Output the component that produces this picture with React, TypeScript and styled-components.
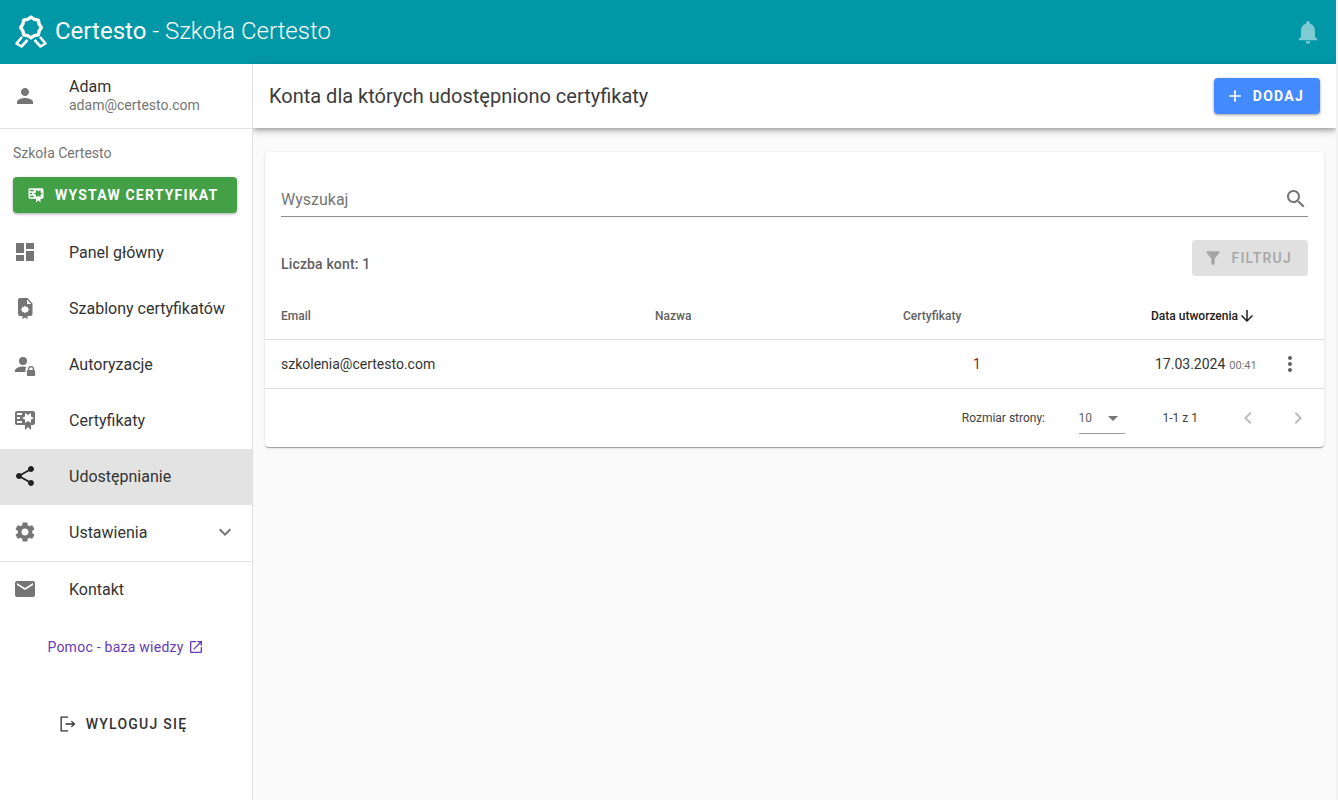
import styled, { createGlobalStyle } from 'styled-components';

const GlobalStyle = createGlobalStyle`
  html, body {
    margin: 0;
    padding: 0;
    background: #fafafa;
    font-family: 'Roboto', 'Liberation Sans', sans-serif;
    overflow: hidden;
  }
  * { box-sizing: border-box; }
`;

const Page = styled.div`
  display: flex;
  flex-direction: column;
  width: 1338px;
  height: 800px;
  overflow: hidden;
  border-right: 2px solid #f1f1f1;
`;

const TopBar = styled.header`
  display: flex;
  align-items: center;
  justify-content: space-between;
  flex: 0 0 64px;
  padding: 0 14px;
  background: #0097a7;
  color: #fff;
`;

const Brand = styled.div`
  display: flex;
  align-items: center;
  gap: 7px;
  font-size: 24px;
  font-weight: 300;
  line-height: 32px;
`;

const BrandText = styled.span`
  padding-bottom: 3px;
`;

const BrandName = styled.b`
  font-weight: 400;
`;

const Body = styled.div`
  display: flex;
  flex: 1;
  min-height: 0;
`;

const Sidebar = styled.aside`
  position: relative;
  z-index: 1;
  display: flex;
  flex-direction: column;
  flex: 0 0 253px;
  background: #fff;
  border-right: 1px solid #e0e0e0;
`;

const UserBox = styled.div`
  display: flex;
  align-items: center;
  height: 65px;
  padding: 0 0 1px 13px;
  border-bottom: 1px solid #e0e0e0;
`;

const IconSlot = styled.span`
  display: flex;
  flex: 0 0 24px;
  margin-right: 32px;
  color: #757575;
`;

const UserName = styled.div`
  font-size: 16px;
  line-height: 20px;
  color: #333;
`;

const UserMail = styled.div`
  font-size: 14px;
  line-height: 17px;
  color: #757575;
`;

const SchoolLabel = styled.div`
  padding: 16px 13px 0;
  font-size: 14px;
  line-height: 17px;
  color: #757575;
`;

const IssueButton = styled.button`
  display: flex;
  align-items: center;
  gap: 10px;
  height: 36px;
  margin: 15px 15px 12px 13px;
  padding: 0 0 0 14px;
  border: none;
  border-radius: 4px;
  background: #43a047;
  color: #fff;
  font-family: inherit;
  font-size: 14px;
  font-weight: 700;
  letter-spacing: 1.19px;
  box-shadow: 0 1px 3px rgba(0, 0, 0, 0.35);
`;

const NavList = styled.nav`
  display: flex;
  flex-direction: column;
`;

const NavItem = styled.div<{ $active?: boolean; $divided?: boolean }>`
  display: flex;
  align-items: center;
  height: ${({ $divided }) => ($divided ? '57px' : '56px')};
  padding: 0 15px 2px 13px;
  background: ${({ $active }) => ($active ? '#e3e3e3' : 'transparent')};
  border-bottom: ${({ $divided }) => ($divided ? '1px solid #e0e0e0' : 'none')};
  font-size: 16px;
  color: #333;

  ${IconSlot} {
    color: ${({ $active }) => ($active ? '#212121' : '#757575')};
  }
`;

const NavLabel = styled.span`
  flex: 1;
`;

const HelpLink = styled.a`
  display: flex;
  align-items: center;
  justify-content: center;
  gap: 4px;
  margin-top: 20px;
  padding-right: 1px;
  font-size: 14px;
  letter-spacing: 0.25px;
  line-height: 18px;
  color: #673ab7;
`;

const LogoutButton = styled.div`
  display: flex;
  align-items: center;
  justify-content: center;
  gap: 8px;
  margin-top: 58px;
  padding-right: 7px;
  font-size: 14px;
  font-weight: 500;
  letter-spacing: 1.25px;
  line-height: 18px;
  color: #333;
`;

const Main = styled.main`
  display: flex;
  flex-direction: column;
  flex: 1;
  min-width: 0;
`;

const TitleBar = styled.div`
  display: flex;
  align-items: center;
  justify-content: space-between;
  flex: 0 0 64px;
  padding: 0 16px;
  background: #fff;
  box-shadow: 0 2px 4px -1px rgba(0, 0, 0, 0.2), 0 4px 5px 0 rgba(0, 0, 0, 0.14), 0 1px 10px 0 rgba(0, 0, 0, 0.12);
`;

const PageTitle = styled.h1`
  margin: 0;
  font-size: 20px;
  font-weight: 400;
  line-height: 28px;
  color: #3c3c3c;
`;

const AddButton = styled.button`
  display: flex;
  align-items: center;
  gap: 8px;
  height: 36px;
  padding: 0 16px 0 11px;
  border: none;
  border-radius: 4px;
  background: #448aff;
  color: #fff;
  font-family: inherit;
  font-size: 14px;
  font-weight: 700;
  letter-spacing: 1.25px;
  box-shadow: 0 1px 3px rgba(0, 0, 0, 0.4);
`;

const Card = styled.section`
  margin: 24px 12px 0;
  padding-top: 24px;
  background: #fff;
  border-radius: 4px;
  box-shadow: 0 2px 1px -1px rgba(0, 0, 0, 0.2), 0 1px 1px 0 rgba(0, 0, 0, 0.14), 0 1px 3px 0 rgba(0, 0, 0, 0.12);
`;

const SearchRow = styled.div`
  display: flex;
  align-items: center;
  justify-content: space-between;
  height: 41px;
  margin: 0 16px;
  padding-top: 6px;
  border-bottom: 1px solid #8c8c8c;
  font-size: 16px;
  color: #757575;
`;

const FilterRow = styled.div`
  display: flex;
  align-items: center;
  justify-content: space-between;
  margin: 23px 16px 0;
`;

const CountLabel = styled.div`
  padding-top: 12px;
  font-size: 14px;
  font-weight: 500;
  letter-spacing: 0.15px;
  color: #616161;
`;

const FilterButton = styled.button`
  display: flex;
  align-items: center;
  gap: 8px;
  height: 36px;
  padding: 0 16px 0 11px;
  border: none;
  border-radius: 4px;
  background: #e0e0e0;
  color: #a6a6a6;
  font-family: inherit;
  font-size: 14px;
  font-weight: 500;
  letter-spacing: 1.25px;
`;

const Row = styled.div<{ $height: number; $noBorder?: boolean }>`
  display: grid;
  grid-template-columns: 374px 248px 196px 1fr 54px;
  align-items: center;
  height: ${({ $height }) => $height}px;
  padding-left: 16px;
  border-bottom: ${({ $noBorder }) => ($noBorder ? 'none' : '1px solid #e0e0e0')};
`;

const HeadRow = styled(Row)`
  padding-top: 16px;
`;

const HeadCell = styled.div<{ $sorted?: boolean; $indent?: number }>`
  display: flex;
  align-items: center;
  padding-left: ${({ $indent }) => $indent || 0}px;
  font-size: 12px;
  font-weight: 500;
  white-space: nowrap;
  color: ${({ $sorted }) => ($sorted ? '#212121' : '#616161')};
`;

const Cell = styled.div<{ $indent?: number }>`
  padding-left: ${({ $indent }) => $indent || 0}px;
  font-size: 14px;
  white-space: nowrap;
  color: #333;
`;

const Count = styled(Cell)`
  color: #8a1f1f;
`;

const Time = styled.span`
  margin-left: 4px;
  font-size: 11px;
  color: #757575;
`;

const RowAction = styled.span`
  display: flex;
  padding-left: 8px;
  color: #616161;
`;

const Pagination = styled.div`
  display: flex;
  align-items: center;
  justify-content: flex-end;
  height: 58px;
  padding-right: 14px;
  font-size: 12px;
  color: #424242;
`;

const PageSize = styled.div`
  display: flex;
  align-items: center;
  justify-content: space-between;
  width: 46px;
  height: 32px;
  margin: 0 38px 0 33.5px;
  border-bottom: 1px solid #9e9e9e;
  color: #616161;
`;

const PageRange = styled.span`
  margin-right: 12px;
`;

const PagerIcon = styled.span`
  display: flex;
  margin-left: 26px;
  color: #bdbdbd;
`;

type IconProps = {
  d: string;
  size?: number;
  color?: string;
};

function Icon({ d, size = 24, color = 'currentColor' }: IconProps): JSX.Element {
  return (
    <svg width={size} height={size} viewBox="0 0 24 24" fill={color}>
      <path d={d} />
    </svg>
  );
}

const paths = {
  person: 'M12 12c2.21 0 4-1.79 4-4s-1.79-4-4-4-4 1.79-4 4 1.79 4 4 4zm0 2c-2.67 0-8 1.34-8 4v2h16v-2c0-2.66-5.33-4-8-4z',
  dashboard: 'M3 13h8V3H3v10zm0 8h8v-6H3v6zm10 0h8V11h-8v10zm0-18v6h8V3h-8z',
  share: 'M18 16.08c-.76 0-1.44.3-1.96.77L8.91 12.7c.05-.23.09-.46.09-.7s-.04-.47-.09-.7l7.05-4.11c.54.5 1.25.81 2.04.81 1.66 0 3-1.34 3-3s-1.34-3-3-3-3 1.34-3 3c0 .24.04.47.09.7L8.04 9.81C7.5 9.31 6.79 9 6 9c-1.66 0-3 1.34-3 3s1.34 3 3 3c.79 0 1.5-.31 2.04-.81l7.12 4.16c-.05.21-.08.43-.08.65 0 1.61 1.31 2.92 2.92 2.92 1.61 0 2.92-1.31 2.92-2.92s-1.31-2.92-2.92-2.92z',
  settings: 'M19.14 12.94c.04-.3.06-.61.06-.94 0-.32-.02-.64-.07-.94l2.03-1.58c.18-.14.23-.41.12-.61l-1.92-3.32c-.12-.22-.37-.29-.59-.22l-2.39.96c-.5-.38-1.03-.7-1.62-.94l-.36-2.54c-.04-.24-.24-.41-.48-.41h-3.84c-.24 0-.43.17-.47.41l-.36 2.54c-.59.24-1.13.57-1.62.94l-2.39-.96c-.22-.08-.47 0-.59.22L2.74 8.87c-.12.21-.08.47.12.61l2.03 1.58c-.05.3-.09.63-.09.94s.02.64.07.94l-2.03 1.58c-.18.14-.23.41-.12.61l1.92 3.32c.12.22.37.29.59.22l2.39-.96c.5.38 1.03.7 1.62.94l.36 2.54c.05.24.24.41.48.41h3.84c.24 0 .44-.17.47-.41l.36-2.54c.59-.24 1.13-.56 1.62-.94l2.39.96c.22.08.47 0 .59-.22l1.92-3.32c.12-.22.07-.47-.12-.61l-2.01-1.58zM12 15.6c-1.98 0-3.6-1.62-3.6-3.6s1.62-3.6 3.6-3.6 3.6 1.62 3.6 3.6-1.62 3.6-3.6 3.6z',
  email: 'M20 4H4c-1.1 0-1.99.9-1.99 2L2 18c0 1.1.9 2 2 2h16c1.1 0 2-.9 2-2V6c0-1.1-.9-2-2-2zm0 4l-8 5-8-5V6l8 5 8-5v2z',
  bell: 'M12 22c1.1 0 2-.9 2-2h-4c0 1.1.89 2 2 2zm6-6v-5c0-3.07-1.64-5.64-4.5-6.32V4c0-.83-.67-1.5-1.5-1.5s-1.5.67-1.5 1.5v.68C7.63 5.36 6 7.92 6 11v5l-2 2v1h16v-1l-2-2z',
  search: 'M15.5 14h-.79l-.28-.27C15.41 12.59 16 11.11 16 9.5 16 5.91 13.09 3 9.5 3S3 5.91 3 9.5 5.91 16 9.5 16c1.61 0 3.09-.59 4.23-1.57l.27.28v.79l5 4.99L20.49 19l-4.99-5zm-6 0C7.01 14 5 11.99 5 9.5S7.01 5 9.5 5 14 7.01 14 9.5 11.99 14 9.5 14z',
  filter: 'M4.25 5.61C6.27 8.2 10 13 10 13v6c0 .55.45 1 1 1h2c.55 0 1-.45 1-1v-6s3.72-4.8 5.74-7.39c.51-.66.04-1.61-.79-1.61H5.04c-.83 0-1.3.95-.79 1.61z',
  more: 'M12 8c1.1 0 2-.9 2-2s-.9-2-2-2-2 .9-2 2 .9 2 2 2zm0 2c-1.1 0-2 .9-2 2s.9 2 2 2 2-.9 2-2-.9-2-2-2zm0 6c-1.1 0-2 .9-2 2s.9 2 2 2 2-.9 2-2-.9-2-2-2z',
  arrowDown: 'M20 12l-1.41-1.41L13 16.17V4h-2v12.17l-5.58-5.59L4 12l8 8 8-8z',
  add: 'M19 13h-6v6h-2v-6H5v-2h6V5h2v6h6v2z',
  chevronLeft: 'M15.41 7.41L14 6l-6 6 6 6 1.41-1.41L10.83 12z',
  chevronRight: 'M10 6L8.59 7.41 13.17 12l-4.58 4.59L10 18l6-6z',
  expand: 'M16.59 8.59L12 13.17 7.41 8.59 6 10l6 6 6-6z',
  dropDown: 'M7 10l5 5 5-5z',
  openNew: 'M19 19H5V5h7V3H5c-1.11 0-2 .9-2 2v14c0 1.1.89 2 2 2h14c1.1 0 2-.9 2-2v-7h-2v7zM14 3v2h3.59l-9.83 9.83 1.41 1.41L19 6.41V10h2V3h-7z',
  certificate: 'M4 3C2.89 3 2 3.89 2 5v10a2 2 0 0 0 2 2h8v5l3-3 3 3v-5h2a2 2 0 0 0 2-2V5a2 2 0 0 0-2-2H4zm8 2l3 2 3-2v3.5l3 1.5-3 1.5V15l-3-2-3 2v-3.5L9 10l3-1.5V5zM4 5h5v2H4V5zm0 4h3v2H4V9zm0 4h5v2H4v-2z',
  logout: 'M3 3h9v1.6H4.6v14.8H12V21H3zM16.6 8l4.4 4-4.4 4-1.1-1.1 2.3-2.1H9v-1.6h8.8l-2.3-2.1z',
};

// scalloped ring of the rosette, 8 bumps around the centre of the logo
const rosette = Array.from({ length: 16 }, (_, i) => {
  const angle = (i * Math.PI) / 8;
  const radius = i % 2 === 0 ? 10.4 : 8.8;
  const x = 17 + radius * Math.sin(angle);
  const y = 12.5 - radius * Math.cos(angle);
  return `${i === 0 ? 'M' : 'L'}${x.toFixed(2)} ${y.toFixed(2)}`;
}).join(' ');

function Logo(): JSX.Element {
  return (
    <svg width="34" height="34" viewBox="0 0 34 34" fill="none" stroke="#fff">
      <path strokeWidth="3.4" strokeLinejoin="round" d={`${rosette} Z`} />
      <path strokeWidth="2.6" strokeLinejoin="round" d="M8 22l-5.500 6.500 5 3L13.500 25M26 22l5.500 6.500-5 3L20.500 25" />
    </svg>
  );
}

function TemplateIcon(): JSX.Element {
  return (
    <svg width="24" height="24" viewBox="0 0 24 24" fill="currentColor">
      <path
        fillRule="evenodd"
        d="M7 2h7.500l5 5.500V18a2 2 0 0 1-2 2h-3v3L12 21.500 9.500 23v-3H7a2 2 0 0 1-2-2V4a2 2 0 0 1 2-2zM14 3.500V8h4.200L14 3.500zM12 9.500l1 1.500 1.800-.2.200 1.700 1.500 1-1.500 1-.2 1.700-1.800-.2-1 1.500-1-1.500-1.800.2-.2-1.700-1.500-1 1.500-1 .2-1.700 1.800.2 1-1.500z"
      />
    </svg>
  );
}

function PersonLockIcon(): JSX.Element {
  return (
    <svg width="24" height="24" viewBox="0 0 24 24" fill="currentColor">
      <circle cx="10" cy="9" r="4" />
      <path d="M2 20v-1.500c0-2.500 5-4 8-4 1.200 0 2.300.2 3.300.5-.5.700-.8 1.600-.8 2.500V20H2z" />
      <path
        fillRule="evenodd"
        d="M18 14a3 3 0 0 1 3 3v1h.3a.8.8 0 0 1 .8.8v4.400a.8.8 0 0 1-.8.8h-6.600a.8.8 0 0 1-.8-.8v-4.400a.8.8 0 0 1 .8-.8h.3v-1a3 3 0 0 1 3-3zm0 1.300a1.700 1.700 0 0 0-1.700 1.700v1h3.400v-1a1.700 1.700 0 0 0-1.700-1.700z"
      />
    </svg>
  );
}

function App(): JSX.Element {
  return (
    <Page>
      <GlobalStyle />
      <TopBar>
        <Brand>
          <Logo />
          <BrandText>
            <BrandName>Certesto</BrandName> - Szkoła Certesto
          </BrandText>
        </Brand>
        <Icon d={paths.bell} size={28} color="#7fcbd3" />
      </TopBar>
      <Body>
        <Sidebar>
          <UserBox>
            <IconSlot>
              <Icon d={paths.person} />
            </IconSlot>
            <div>
              <UserName>Adam</UserName>
              <UserMail>adam@certesto.com</UserMail>
            </div>
          </UserBox>
          <SchoolLabel>Szkoła Certesto</SchoolLabel>
          <IssueButton>
            <Icon d={paths.certificate} size={18} />
            WYSTAW CERTYFIKAT
          </IssueButton>
          <NavList>
            <NavItem>
              <IconSlot>
                <Icon d={paths.dashboard} />
              </IconSlot>
              <NavLabel>Panel główny</NavLabel>
            </NavItem>
            <NavItem>
              <IconSlot>
                <TemplateIcon />
              </IconSlot>
              <NavLabel>Szablony certyfikatów</NavLabel>
            </NavItem>
            <NavItem>
              <IconSlot>
                <PersonLockIcon />
              </IconSlot>
              <NavLabel>Autoryzacje</NavLabel>
            </NavItem>
            <NavItem>
              <IconSlot>
                <Icon d={paths.certificate} />
              </IconSlot>
              <NavLabel>Certyfikaty</NavLabel>
            </NavItem>
            <NavItem $active>
              <IconSlot>
                <Icon d={paths.share} />
              </IconSlot>
              <NavLabel>Udostępnianie</NavLabel>
            </NavItem>
            <NavItem $divided>
              <IconSlot>
                <Icon d={paths.settings} />
              </IconSlot>
              <NavLabel>Ustawienia</NavLabel>
              <Icon d={paths.expand} color="#757575" />
            </NavItem>
            <NavItem>
              <IconSlot>
                <Icon d={paths.email} />
              </IconSlot>
              <NavLabel>Kontakt</NavLabel>
            </NavItem>
          </NavList>
          <HelpLink>
            Pomoc - baza wiedzy <Icon d={paths.openNew} size={16} />
          </HelpLink>
          <LogoutButton>
            <Icon d={paths.logout} size={20} />
            WYLOGUJ SIĘ
          </LogoutButton>
        </Sidebar>
        <Main>
          <TitleBar>
            <PageTitle>Konta dla których udostępniono certyfikaty</PageTitle>
            <AddButton>
              <Icon d={paths.add} size={20} />
              DODAJ
            </AddButton>
          </TitleBar>
          <Card>
            <SearchRow>
              Wyszukaj
              <Icon d={paths.search} color="#757575" />
            </SearchRow>
            <FilterRow>
              <CountLabel>Liczba kont: 1</CountLabel>
              <FilterButton>
                <Icon d={paths.filter} size={20} color="#a6a6a6" />
                FILTRUJ
              </FilterButton>
            </FilterRow>
            <HeadRow $height={64}>
              <HeadCell>Email</HeadCell>
              <HeadCell>Nazwa</HeadCell>
              <HeadCell>Certyfikaty</HeadCell>
              <HeadCell $sorted $indent={52}>
                Data utworzenia
                <Icon d={paths.arrowDown} size={18} color="#212121" />
              </HeadCell>
              <span />
            </HeadRow>
            <Row $height={49}>
              <Cell>szkolenia@certesto.com</Cell>
              <span />
              <Count $indent={70}>1</Count>
              <Cell $indent={56}>
                17.03.2024<Time>00:41</Time>
              </Cell>
              <RowAction>
                <Icon d={paths.more} />
              </RowAction>
            </Row>
            <Pagination>
              Rozmiar strony:
              <PageSize>
                10
                <Icon d={paths.dropDown} color="#757575" />
              </PageSize>
              <PageRange>1-1 z 1</PageRange>
              <PagerIcon>
                <Icon d={paths.chevronLeft} />
              </PagerIcon>
              <PagerIcon>
                <Icon d={paths.chevronRight} />
              </PagerIcon>
            </Pagination>
          </Card>
        </Main>
      </Body>
    </Page>
  );
}

export default App;
